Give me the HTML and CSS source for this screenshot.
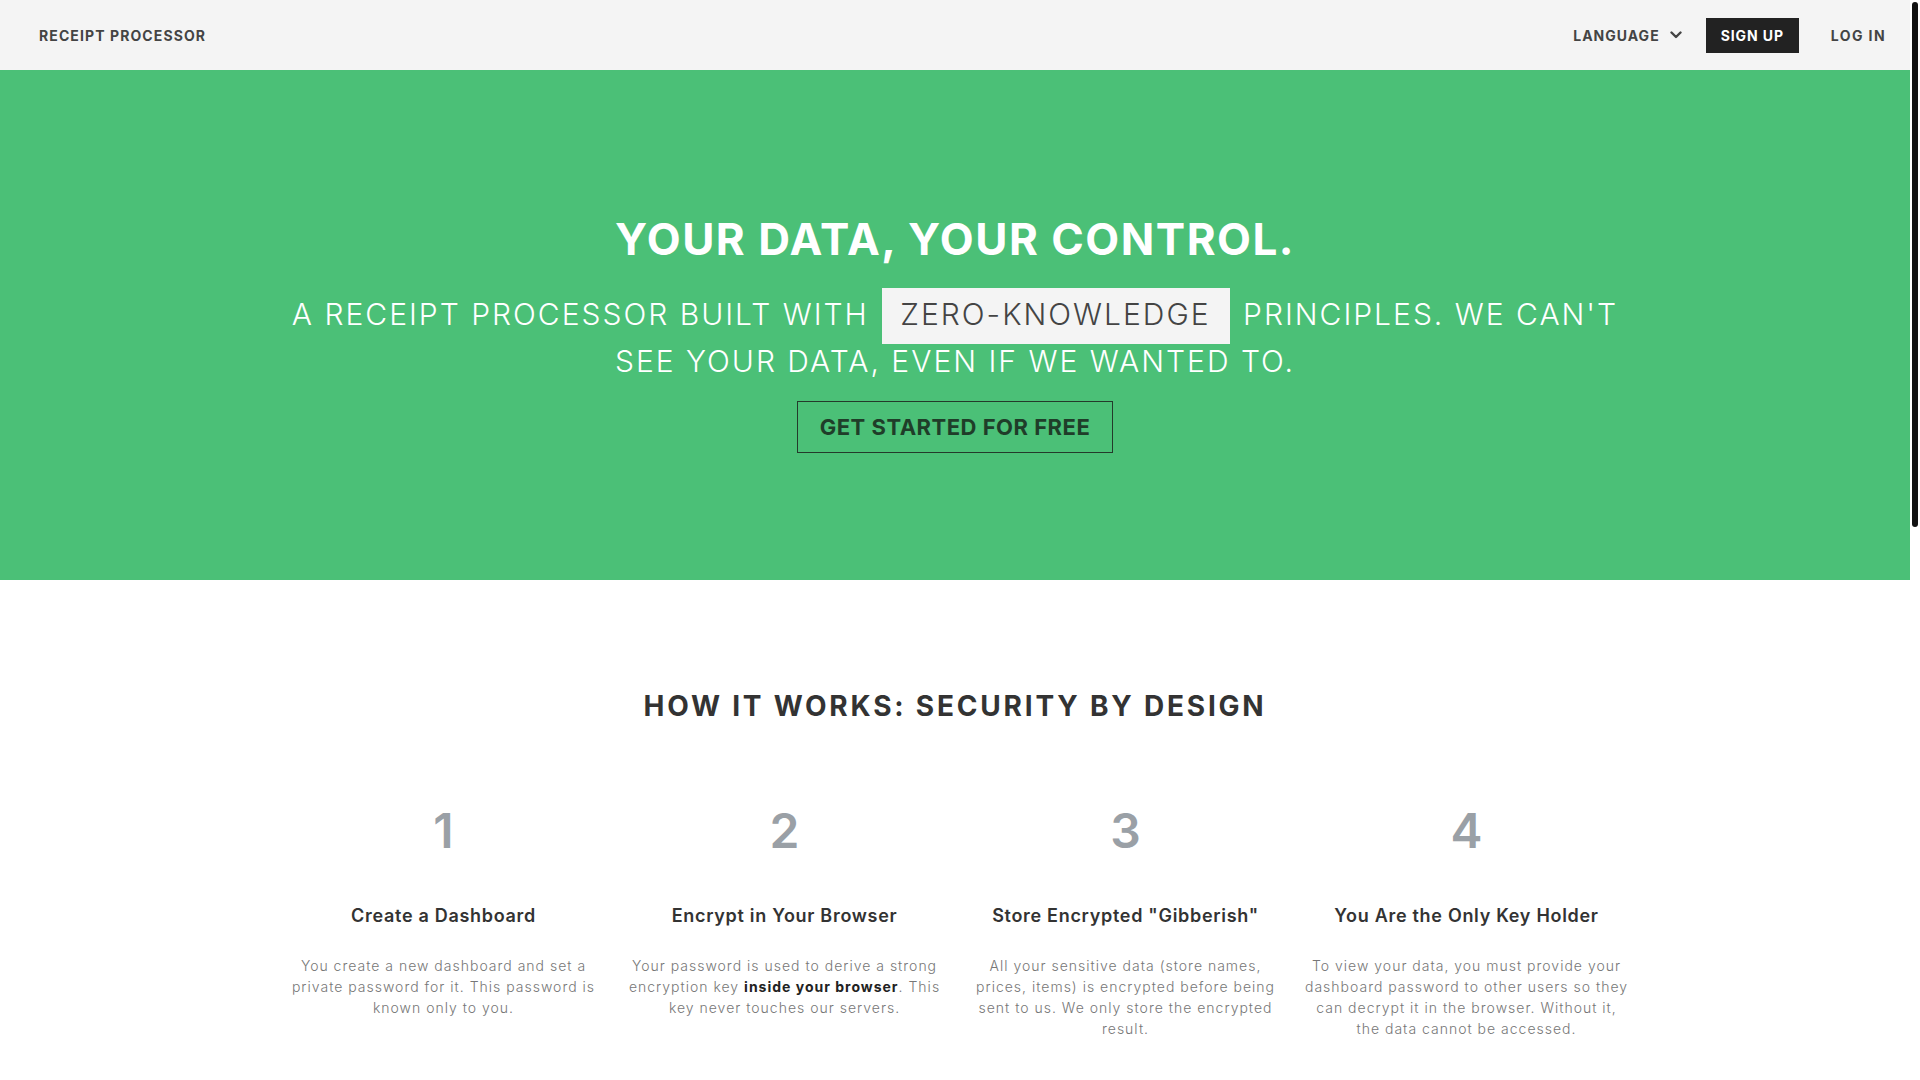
FILE: index.html
```html
<!DOCTYPE html>
<html lang="en">

<head>
    <meta charset="UTF-8">
    <meta name="viewport" content="width=device-width, initial-scale=1.0">
    <title>Receipt Processor</title>
    <link rel="stylesheet" href="styles.css">
</head>

<body>
    <header class="topbar">
        <a class="logo" href="#">RECEIPT PROCESSOR</a>
        <nav class="nav">
            <button type="button" class="lang">
                LANGUAGE
                <svg width="12" height="8" viewBox="0 0 12 8" aria-hidden="true">
                    <polyline points="1.5,1.5 6,6 10.5,1.5" fill="none" stroke="currentColor" stroke-width="2.4" stroke-linecap="round" stroke-linejoin="round" />
                </svg>
            </button>
            <a class="signup" href="#">SIGN UP</a>
            <a class="login" href="#">LOG IN</a>
        </nav>
    </header>

    <section class="hero">
        <h1>YOUR DATA, YOUR CONTROL.</h1>
        <p class="tagline">A RECEIPT PROCESSOR BUILT WITH <span class="tag">ZERO-KNOWLEDGE</span> PRINCIPLES. WE CAN'T<br>SEE YOUR DATA, EVEN IF WE WANTED TO.</p>
        <a class="cta" href="#">GET STARTED FOR FREE</a>
    </section>

    <section class="how">
        <h2>HOW IT WORKS: SECURITY BY DESIGN</h2>
        <div class="steps">
            <div class="step">
                <div class="num">1</div>
                <h3>Create a Dashboard</h3>
                <p>You create a new dashboard and set a private password for it. This password is known only to you.</p>
            </div>
            <div class="step">
                <div class="num">2</div>
                <h3>Encrypt in Your Browser</h3>
                <p>Your password is used to derive a strong encryption key <strong>inside your browser</strong>. This key never touches our servers.</p>
            </div>
            <div class="step">
                <div class="num">3</div>
                <h3>Store Encrypted "Gibberish"</h3>
                <p>All your sensitive data (store names, prices, items) is encrypted before being sent to us. We only store the encrypted result.</p>
            </div>
            <div class="step">
                <div class="num">4</div>
                <h3>You Are the Only Key Holder</h3>
                <p>To view your data, you must provide your dashboard password to other users so they can decrypt it in the browser. Without it, the data cannot be accessed.</p>
            </div>
        </div>
    </section>

    <section class="closing">
        <h2>READY TO TAKE CONTROL?</h2>
        <a class="cta dark" href="#">GET STARTED FOR FREE</a>
    </section>

    <footer class="footer">RECEIPT PROCESSOR</footer>

    <!-- scroll rail drawn over the right edge -->
    <div class="rail" aria-hidden="true"><div class="thumb"></div></div>
</body>

</html>
```

FILE: styles.css
```css
body {
    font-family: Inter, "Noto Sans", sans-serif;
    margin: 0 10px 0 0;
    padding: 0;
    color: #333;
}

a {
    text-decoration: none;
}

/* top bar */
.topbar {
    display: flex;
    align-items: center;
    justify-content: space-between;
    height: 70px;
    padding: 0 24px 0 39px;
    background-color: #f4f4f4;
}

.logo {
    font-size: 14px;
    font-weight: 700;
    letter-spacing: 1.1px;
    color: #444;
}

.nav {
    display: flex;
    align-items: center;
}

.lang {
    display: flex;
    align-items: center;
    gap: 10px;
    background: none;
    border: none;
    padding: 0;
    font-family: inherit;
    font-size: 14px;
    font-weight: 700;
    letter-spacing: 1px;
    color: #444;
    cursor: pointer;
}

.signup {
    margin-left: 24px;
    padding: 9px 15px;
    background-color: #222;
    color: #fff;
    font-size: 14px;
    font-weight: 700;
    letter-spacing: 0.9px;
}

.login {
    margin-left: 32px;
    font-size: 14px;
    font-weight: 700;
    letter-spacing: 1.4px;
    color: #444;
}

/* hero */
.hero {
    background-color: #4bc077;
    color: #fff;
    text-align: center;
    padding: 143px 20px 127px;
}

.hero h1 {
    margin: 0 0 25px;
    font-size: 44px;
    line-height: 53px;
    font-weight: 700;
    letter-spacing: 1.5px;
}

.tagline {
    margin: 0 0 16px;
    font-size: 30px;
    line-height: 47px;
    font-weight: 300;
    letter-spacing: 2px;
}

.tag {
    margin: 0 3px;
    padding: 8px 19px 12px 18px;
    background-color: #f4f4f4;
    color: #444;
}

.cta {
    display: inline-block;
    padding: 12px 22px;
    border: 1px solid #243a2b;
    color: #1f3d29;
    font-size: 22px;
    line-height: 26px;
    font-weight: 700;
    letter-spacing: 0.5px;
}

/* how it works */
.how {
    padding: 109px 20px 120px;
    text-align: center;
}

.how h2 {
    margin: 0 0 84px;
    font-size: 28px;
    line-height: 34px;
    font-weight: 700;
    letter-spacing: 2.8px;
    color: #333;
}

.steps {
    display: grid;
    grid-template-columns: repeat(4, 324px);
    gap: 17px;
    justify-content: center;
}

.num {
    font-size: 48px;
    line-height: 48px;
    font-weight: 600;
    color: #9aa0a6;
}

.step h3 {
    margin: 49px 0 27px;
    font-size: 18px;
    line-height: 24px;
    font-weight: 600;
    letter-spacing: 0.7px;
    color: #333;
}

.step p {
    margin: 0;
    font-size: 14px;
    line-height: 21px;
    font-weight: 300;
    letter-spacing: 1px;
    color: #777;
}

.step strong {
    font-weight: 700;
    color: #222;
}

/* below the fold */
.closing {
    padding: 200px 20px 260px;
    text-align: center;
    background-color: #f4f4f4;
}

.closing h2 {
    margin: 0 0 30px;
    font-size: 28px;
    letter-spacing: 2px;
}

.cta.dark {
    border-color: #222;
    color: #222;
}

.footer {
    padding: 40px 20px;
    text-align: center;
    font-size: 13px;
    font-weight: 700;
    letter-spacing: 1.3px;
    color: #777;
}

/* scroll rail */
.rail {
    position: fixed;
    top: 0;
    right: 0;
    width: 10px;
    height: 100vh;
    background-color: #fff;
}

.thumb {
    margin: 2px 2px 0 2px;
    height: 525px;
    background-color: #111;
    border-radius: 3px;
}
```
